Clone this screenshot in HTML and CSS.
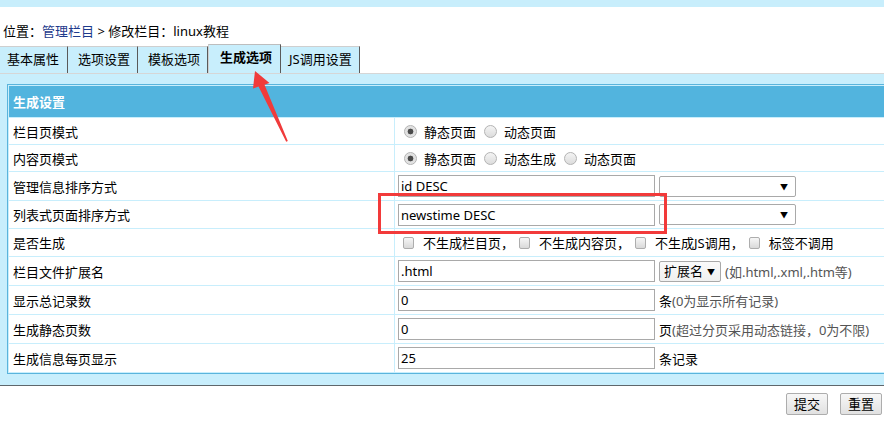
FILE: index.html
```html
<!DOCTYPE html>
<html lang="zh-CN">
<head>
<meta charset="utf-8">
<title>修改栏目</title>
<link rel="stylesheet" href="styles.css">
</head>
<body>
<div class="topbar"></div>
<div class="crumb">位置：<a href="#">管理栏目</a> &gt; 修改栏目：linux教程</div>
<div class="tabs">
  <span class="tab first">基本属性</span>
  <span class="tab">选项设置</span>
  <span class="tab">模板选项</span>
  <span class="tab active">生成选项</span>
  <span class="tab">JS调用设置</span>
</div>
<div class="panel">
  <table class="form">
    <tr><th colspan="2">生成设置</th></tr>
    <tr class="r26">
      <td class="label">栏目页模式</td>
      <td class="field"><div class="opts">
        <label class="opt"><input type="radio" name="a" checked><span>静态页面</span></label>
        <label class="opt"><input type="radio" name="a"><span>动态页面</span></label>
      </div></td>
    </tr>
    <tr class="r26">
      <td class="label">内容页模式</td>
      <td class="field"><div class="opts">
        <label class="opt"><input type="radio" name="b" checked><span>静态页面</span></label>
        <label class="opt"><input type="radio" name="b"><span>动态生成</span></label>
        <label class="opt"><input type="radio" name="b"><span>动态页面</span></label>
      </div></td>
    </tr>
    <tr class="r28">
      <td class="label">管理信息排序方式</td>
      <td class="field"><div class="line">
        <input class="text" type="text" value="id DESC">
        <span class="select wide"><span class="arrow">▼</span></span>
      </div></td>
    </tr>
    <tr class="r27">
      <td class="label">列表式页面排序方式</td>
      <td class="field"><div class="line">
        <input class="text" type="text" value="newstime DESC">
        <span class="select wide"><span class="arrow">▼</span></span>
      </div></td>
    </tr>
    <tr class="r27">
      <td class="label">是否生成</td>
      <td class="field"><div class="checks">
        <label class="chk"><input type="checkbox"><span>不生成栏目页，</span></label>
        <label class="chk"><input type="checkbox"><span>不生成内容页，</span></label>
        <label class="chk"><input type="checkbox"><span>不生成JS调用，</span></label>
        <label class="chk"><input type="checkbox"><span>标签不调用</span></label>
      </div></td>
    </tr>
    <tr class="r28">
      <td class="label">栏目文件扩展名</td>
      <td class="field"><div class="line">
        <input class="text" type="text" value=".html">
        <span class="select small">扩展名<span class="arrow">▼</span></span>
        <span class="hint">(如.html,.xml,.htm等)</span>
      </div></td>
    </tr>
    <tr class="r28">
      <td class="label">显示总记录数</td>
      <td class="field"><div class="line">
        <input class="text" type="text" value="0">
        <span class="unit">条<span class="hint">(0为显示所有记录)</span></span>
      </div></td>
    </tr>
    <tr class="r28">
      <td class="label">生成静态页数</td>
      <td class="field"><div class="line">
        <input class="text" type="text" value="0">
        <span class="unit">页<span class="hint">(超过分页采用动态链接，0为不限)</span></span>
      </div></td>
    </tr>
    <tr class="r28">
      <td class="label">生成信息每页显示</td>
      <td class="field"><div class="line">
        <input class="text" type="text" value="25">
        <span class="unit">条记录</span>
      </div></td>
    </tr>
  </table>
</div>
<div class="actions">
  <button class="btn" type="button">提交</button>
  <button class="btn" type="button">重置</button>
</div>
<div class="highlight"></div>
<svg class="arrow-mark" width="884" height="440" viewBox="0 0 884 440">
  <polygon points="255,71 269.5,83 264.5,84.8 287.8,141 286.2,141.8 258.5,86.6 253,88.5" fill="#f03b3b"/>
</svg>
</body>
</html>
```
FILE: styles.css
```css
html, body {
  margin: 0;
  padding: 0;
  width: 884px;
  height: 440px;
  overflow: hidden;
  background: #fff;
  font-family: "Noto Sans", "Noto Sans CJK SC", sans-serif;
  font-size: 13px;
  color: #000;
  position: relative;
}

.topbar {
  height: 7px;
  background: #c8eefc;
}

.crumb {
  height: 37px;
  box-sizing: border-box;
  padding: 15px 0 0 3px;
  line-height: 18px;
  white-space: nowrap;
}
.crumb a {
  color: #1d3a8c;
  text-decoration: none;
}

.tabs {
  display: flex;
  align-items: flex-end;
  height: 29px;
}
.tab {
  height: 27px;
  box-sizing: border-box;
  line-height: 25px;
  padding: 0 7px 0 10px;
  background: #c8eefc;
  border-top: 1px solid #cfcfcf;
  border-right: 1px solid #5a5a5a;
  white-space: nowrap;
}
.tab.first {
  padding-left: 7px;
  padding-right: 8px;
}
.tab.active {
  height: 29px;
  line-height: 24px;
  font-weight: bold;
  padding: 0 8px 0 11px;
  border-left: 1px solid #cfcfcf;
  border-top: 1px solid #bdbdbd;
}
.tab:last-child {
  padding: 0 7px 0 8px;
}

.panel {
  background: #c8eefc;
  border-top: 1px solid #d6d6d6;
  border-bottom: 1px solid #5f676b;
  padding: 10px 0 11px 7px;
  overflow: hidden;
}

.form {
  width: 900px;
  border: 1px solid #5ab4dc;
  border-collapse: separate;
  border-spacing: 1px;
  background: #c8eefc;
}
.form th {
  height: 31px;
  padding: 0 0 0 4px;
  background: #52b4de;
  color: #fff;
  font-weight: bold;
  text-align: left;
}
.form td {
  background: #fff;
  padding: 0;
  vertical-align: middle;
}
.form td.label {
  width: 381px;
  padding-left: 4px;
}
.form td.field {
  padding-left: 3px;
}
.r26 td { height: 26px; }
.r27 td { height: 27px; }
.r28 td { height: 28px; }

.opts, .checks, .line {
  display: flex;
  align-items: center;
  white-space: nowrap;
}
.opts {
  padding-left: 6px;
}
.opt {
  display: flex;
  align-items: center;
  margin-right: 8px;
}
.opt input {
  appearance: none;
  -webkit-appearance: none;
  width: 13px;
  height: 13px;
  margin: 0 7px 0 0;
  border: 1px solid #b3b3b3;
  border-radius: 50%;
  background: linear-gradient(#f4f4f4, #dcdcdc);
  box-sizing: border-box;
}
.opt input:checked {
  background: radial-gradient(circle, #4a4a4a 0 2.6px, #dedede 3.2px, #ececec 100%);
}

.checks {
  padding-left: 5px;
}
.chk {
  display: flex;
  align-items: center;
  margin-right: 5px;
}
.chk input {
  appearance: none;
  -webkit-appearance: none;
  width: 11px;
  height: 12px;
  margin: 0 9px 0 0;
  border: 1px solid #adadad;
  border-radius: 2px;
  background: linear-gradient(#f6f6f6, #d9d9d9);
  box-sizing: border-box;
}

.text {
  width: 257px;
  height: 22px;
  box-sizing: border-box;
  border: 1px solid #a9a9a9;
  padding: 0 2px;
  margin: 0;
  font: inherit;
  color: #000;
  background: #fff;
}
.select {
  position: relative;
  display: block;
  height: 21px;
  box-sizing: border-box;
  border: 1px solid #a9a9a9;
  border-radius: 2px;
  background: #fff;
  margin-left: 4px;
  line-height: 19px;
}
.select.wide {
  width: 137px;
}
.select.small {
  width: 62px;
  padding-left: 4px;
  background: linear-gradient(#fafafa, #f0f0f0);
}
.select .arrow {
  position: absolute;
  right: 7px;
  top: 0;
  font-size: 8px;
  line-height: 19px;
}
.select.small .arrow {
  right: 5px;
}
.hint {
  color: #555;
  margin-left: 4px;
}
.unit {
  margin-left: 4px;
}
.unit .hint {
  margin-left: 0;
}

.actions {
  display: flex;
  justify-content: flex-end;
  gap: 12px;
  padding: 7px 2px 0 0;
}
.btn {
  width: 42px;
  height: 22px;
  box-sizing: border-box;
  padding: 0;
  border: 1px solid #adadad;
  border-radius: 2px;
  background: linear-gradient(#f7f7f7, #e1e1e1);
  font: inherit;
  color: #000;
  line-height: 20px;
}

.highlight {
  position: absolute;
  left: 378px;
  top: 193px;
  width: 283px;
  height: 35px;
  border: 3px solid #f23a3a;
}
.arrow-mark {
  position: absolute;
  left: 0;
  top: 0;
  pointer-events: none;
}
```
